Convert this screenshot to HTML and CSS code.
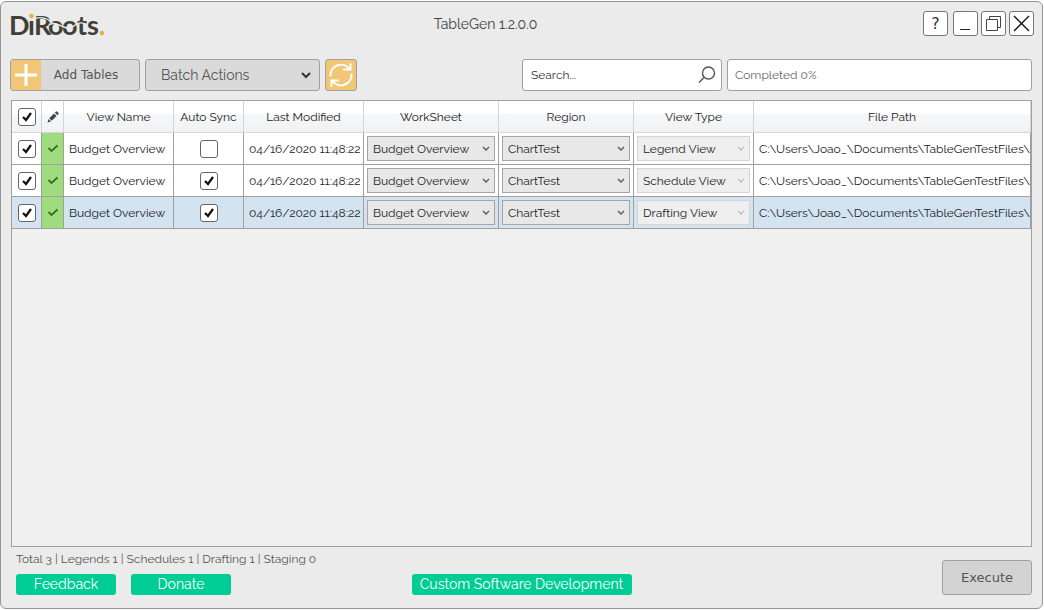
FILE: index.html
```html
<!DOCTYPE html>
<html lang="en">
<head>
    <meta charset="UTF-8">
    <meta name="viewport" content="width=device-width, initial-scale=1.0">
    <title>TableGen 1.2.0.0</title>
    <link rel="stylesheet" href="styles.css">
</head>
<body>
    <div class="window">
        <header class="titlebar">
            <svg class="logo" width="96" height="36" viewBox="0 0 96 36" role="img" aria-label="DiRoots">
                <text class="logo-text" x="-1 18 24 38 52 67 77" y="24">DıRoots</text>
                <path d="M24 8C32 5 38 7 43 13" fill="none" stroke="#ebebeb" stroke-width="1.300"/>
                <path d="M39 14C48 8 54 21 62 16S70 11 76 13" fill="none" stroke="#ebebeb" stroke-width="1.300"/>
                <circle cx="21.500" cy="5" r="2.200" fill="#efa83a"/>
                <circle cx="92" cy="22" r="2.200" fill="#efa83a"/>
            </svg>
            <h1 class="title">TableGen 1.2.0.0</h1>
            <div class="window-buttons">
                <button class="win-btn help" aria-label="Help">?</button>
                <button class="win-btn" aria-label="Minimize">
                    <svg width="23" height="23"><path d="M6 17.500H16" stroke="#222"/></svg>
                </button>
                <button class="win-btn" aria-label="Restore">
                    <svg width="23" height="23" fill="none" stroke="#444"><path d="M4.500 7.500H15.500V18.500H4.500ZM7.500 7.500V4.500H18.500V15.500H15.500"/></svg>
                </button>
                <button class="win-btn" aria-label="Close">
                    <svg width="23" height="23"><path d="M4 4L19 19M19 4L4 19" stroke="#111" stroke-width="1.300"/></svg>
                </button>
            </div>
        </header>

        <div class="toolbar">
            <button class="add-btn">
                <span class="add-icon">
                    <svg width="30" height="30"><path d="M15 4V26M4 15H26" stroke="#fff" stroke-width="3"/></svg>
                </span>
                <span class="add-label">Add Tables</span>
            </button>
            <select class="batch" aria-label="Batch Actions">
                <option>Batch Actions</option>
            </select>
            <button class="refresh" aria-label="Refresh">
                <svg width="30" height="30" fill="none" stroke="#fff" stroke-width="2" stroke-linecap="round">
                    <path d="M4.500 15.500A10.500 10.500 0 0 1 23.500 9M24.500 4V9.500L18 9.500"/>
                    <path d="M25.500 14.500A10.500 10.500 0 0 1 6.500 21M5.500 26V20.500L12 20.500"/>
                </svg>
            </button>
            <span></span>
            <div class="search">
                <input type="text" placeholder="Search..." aria-label="Search">
                <svg width="18" height="18" fill="none" stroke="#555" stroke-width="1.400"><circle cx="10.500" cy="7" r="6"/><path d="M6 11.500L1 16.500"/></svg>
            </div>
            <div class="completed" role="progressbar" aria-valuenow="0" aria-label="Progress">Completed 0%</div>
        </div>

        <main class="grid">
            <table>
                <colgroup>
                    <col class="c-check"><col class="c-state"><col class="c-name"><col class="c-sync"><col class="c-date"><col class="c-sheet"><col class="c-region"><col class="c-type"><col>
                </colgroup>
                <thead>
                    <tr>
                        <th class="center"><input type="checkbox" aria-label="Select all" checked></th>
                        <th class="center">
                            <svg width="12" height="12" viewBox="0 0 12 12" fill="#444"><path d="M0.500 11.500L1.500 8L4 10.500ZM2.200 7.200L7 2.400L9.600 5L4.800 9.800ZM7.800 1.600L9 .500Q9.500 0 10.200.700L11.300 1.800Q12 2.500 11.500 3L10.400 4.200Z"/></svg>
                        </th>
                        <th>View Name</th>
                        <th>Auto Sync</th>
                        <th>Last Modified</th>
                        <th>WorkSheet</th>
                        <th>Region</th>
                        <th>View Type</th>
                        <th>File Path</th>
                    </tr>
                </thead>
                <tbody>
                    <tr>
                        <td class="center"><input type="checkbox" aria-label="Select row 1" checked></td>
                        <td class="center state"><svg width="12" height="9"><path d="M1.500 4L4.500 7L10.500 1.500" fill="none" stroke="#3c6e2e" stroke-width="1.800"/></svg></td>
                        <td>Budget Overview</td>
                        <td class="center"><input type="checkbox" aria-label="Auto sync row 1"></td>
                        <td>04/16/2020 11:48:22</td>
                        <td class="pick"><select aria-label="Worksheet row 1"><option>Budget Overview</option></select></td>
                        <td class="pick"><select aria-label="Region row 1"><option>ChartTest</option></select></td>
                        <td class="pick"><select aria-label="View type row 1" disabled><option>Legend View</option></select></td>
                        <td>C:\Users\Joao_\Documents\TableGenTestFiles\</td>
                    </tr>
                    <tr>
                        <td class="center"><input type="checkbox" aria-label="Select row 2" checked></td>
                        <td class="center state"><svg width="12" height="9"><path d="M1.500 4L4.500 7L10.500 1.500" fill="none" stroke="#3c6e2e" stroke-width="1.800"/></svg></td>
                        <td>Budget Overview</td>
                        <td class="center"><input type="checkbox" aria-label="Auto sync row 2" checked></td>
                        <td>04/16/2020 11:48:22</td>
                        <td class="pick"><select aria-label="Worksheet row 2"><option>Budget Overview</option></select></td>
                        <td class="pick"><select aria-label="Region row 2"><option>ChartTest</option></select></td>
                        <td class="pick"><select aria-label="View type row 2" disabled><option>Schedule View</option></select></td>
                        <td>C:\Users\Joao_\Documents\TableGenTestFiles\</td>
                    </tr>
                    <tr class="selected">
                        <td class="center"><input type="checkbox" aria-label="Select row 3" checked></td>
                        <td class="center state"><svg width="12" height="9"><path d="M1.500 4L4.500 7L10.500 1.500" fill="none" stroke="#3c6e2e" stroke-width="1.800"/></svg></td>
                        <td>Budget Overview</td>
                        <td class="center"><input type="checkbox" aria-label="Auto sync row 3" checked></td>
                        <td>04/16/2020 11:48:22</td>
                        <td class="pick"><select aria-label="Worksheet row 3"><option>Budget Overview</option></select></td>
                        <td class="pick"><select aria-label="Region row 3"><option>ChartTest</option></select></td>
                        <td class="pick"><select aria-label="View type row 3" disabled><option>Drafting View</option></select></td>
                        <td>C:\Users\Joao_\Documents\TableGenTestFiles\</td>
                    </tr>
                </tbody>
            </table>
        </main>

        <footer class="footer">
            <div class="footer-left">
                <p class="totals">Total 3 | Legends 1 | Schedules 1 | Drafting 1 | Staging 0</p>
                <div class="links">
                    <button class="green-btn">Feedback</button>
                    <button class="green-btn">Donate</button>
                </div>
            </div>
            <button class="green-btn custom">Custom Software Development</button>
            <button class="execute">Execute</button>
        </footer>
    </div>
</body>
</html>
```
FILE: styles.css
```css
:root {
    --bg: #ebebeb;
    --line: #a0a0a0;
    --orange: #f1c777;
    --green: #00cc96;
    --text: #222;
}

* {
    box-sizing: border-box;
}

body {
    margin: 0;
    padding: 1px 1px 1px 0;
    height: 100vh;
    background: #fff;
    color: var(--text);
    font-family: Raleway, Lato, sans-serif;
    font-size: 12px;
}

button, input, select {
    font: inherit;
    color: inherit;
    margin: 0;
}

button {
    padding: 0;
}

svg {
    display: block;
}

.window {
    display: flex;
    flex-direction: column;
    height: 100%;
    background: var(--bg);
    border: 1px solid #949494;
    border-radius: 6px;
}

/* Title bar */
.titlebar {
    display: flex;
    align-items: flex-start;
    padding: 9px 8px 0 9px;
    height: 57px;
}

.logo {
    flex: none;
    overflow: visible;
}

.logo-text {
    font-family: Lato, sans-serif;
    font-weight: 700;
    font-size: 27px;
    fill: #3f4036;
}

.title {
    flex: 1;
    margin: 3px 0 0;
    padding-right: 58px;
    text-align: center;
    font-size: 14px;
    line-height: 20px;
    font-weight: 400;
    color: #444;
}

.window-buttons {
    display: flex;
    gap: 3px;
}

.win-btn {
    width: 25px;
    height: 25px;
    background: #fff;
    border: 1px solid #777;
    border-radius: 3px;
}

.help {
    margin-right: 2px;
    font: 16px/23px "DejaVu Sans", sans-serif;
    color: #333;
}

/* Toolbar */
.toolbar {
    display: grid;
    grid-template-columns: 130px 175px 32px 1fr 200px 305px;
    gap: 5px;
    height: 32px;
    padding: 0 10px 0 9px;
}

.add-btn, .batch, .refresh, .search, .completed {
    height: 32px;
    border: 1px solid var(--line);
    border-radius: 3px;
}

.add-btn {
    display: flex;
    align-items: center;
    background: #dadada;
    overflow: hidden;
}

.add-icon {
    background: var(--orange);
}

.add-label {
    flex: 1;
    padding-right: 8px;
    font-family: "DejaVu Sans", sans-serif;
    color: #555;
}

.refresh {
    background: var(--orange);
}

select {
    appearance: none;
    border-radius: 0;
    background-repeat: no-repeat;
}

.batch {
    padding: 0 15px;
    font-size: 14px;
    color: #555;
    background-color: #dadada;
    background-image: url("data:image/svg+xml,%3Csvg xmlns='http://www.w3.org/2000/svg' width='10' height='7'%3E%3Cpath d='M1 1L5 5L9 1' fill='none' stroke='%23333' stroke-width='2'/%3E%3C/svg%3E");
    background-position: right 8px center;
}

.search, .completed {
    display: flex;
    align-items: center;
    padding: 0 5px 0 8px;
    background: #fff;
}

.search input {
    flex: 1;
    min-width: 0;
    padding: 0;
    border: 0;
    outline: 0;
    background: none;
}

.search input::placeholder {
    color: #333;
}

.completed {
    padding-left: 7px;
    color: #666;
}

/* Table */
.grid {
    flex: 1;
    margin: 9px 10px 0 10px;
    border: 1px solid var(--line);
    background: #f0f0f0;
}

table {
    width: 100%;
    table-layout: fixed;
    border-spacing: 0;
}

.c-check { width: 30px; }
.c-state { width: 22px; }
.c-name { width: 110px; }
.c-sync { width: 70px; }
.c-date { width: 120px; }
.c-sheet, .c-region { width: 135px; }
.c-type { width: 120px; }

th, td {
    height: 32px;
    padding: 0 5px;
    border-right: 1px solid var(--line);
    border-bottom: 1px solid var(--line);
    text-align: left;
    white-space: nowrap;
    overflow: hidden;
    background: #fff;
}

th {
    padding: 0 2px;
    text-align: center;
    font-weight: 400;
    border-color: #d5d5d5;
    background: linear-gradient(#fff 40%, #f7f8f9 42%, #eff1f3);
}

.selected td {
    background: #d3e3f0;
}

td.state, .selected td.state {
    background: #9fdc7d;
}

.center {
    padding: 0;
}

.center > * {
    display: block;
    margin: 0 auto;
}

.pick {
    padding: 0 3px;
}

.pick select {
    display: block;
    width: 100%;
    height: 25px;
    padding: 0 5px;
    border: 1px solid #a5a5a5;
    background-color: #e8e8e8;
    background-image: url("data:image/svg+xml,%3Csvg xmlns='http://www.w3.org/2000/svg' width='8' height='6'%3E%3Cpath d='M1 1L4 4L7 1' fill='none' stroke='%23555' stroke-width='1.300'/%3E%3C/svg%3E");
    background-position: right 4px top 9px;
}

.pick select:disabled {
    opacity: 1;
    color: var(--text);
    border-color: #d5d5d5;
    background-color: #efefef;
    background-image: url("data:image/svg+xml,%3Csvg xmlns='http://www.w3.org/2000/svg' width='8' height='6'%3E%3Cpath d='M1 1L4 4L7 1' fill='none' stroke='%23bbb' stroke-width='1.300'/%3E%3C/svg%3E");
}

input[type="checkbox"] {
    appearance: none;
    width: 18px;
    height: 18px;
    border: 1px solid #666;
    border-radius: 3px;
    background: #fff no-repeat center;
}

input[type="checkbox"]:checked {
    background-image: url("data:image/svg+xml,%3Csvg xmlns='http://www.w3.org/2000/svg' width='12' height='12'%3E%3Cpath d='M2 6L5 9L10 2' fill='none' stroke='%23111' stroke-width='2.200'/%3E%3C/svg%3E");
}

/* Footer */
.footer {
    display: grid;
    grid-template-columns: 1fr auto 1fr;
    align-items: end;
    padding: 4px 10px 13px;
}

.footer-left {
    padding-left: 5px;
}

.totals {
    margin: 0 0 7px;
    line-height: 16px;
    color: #555;
}

.links {
    display: flex;
    gap: 15px;
}

.green-btn {
    width: 100px;
    height: 21px;
    border: 0;
    border-radius: 3px;
    background: var(--green);
    color: #fff;
    font-size: 14px;
    line-height: 21px;
}

.custom {
    width: 220px;
}

.execute {
    justify-self: end;
    width: 90px;
    height: 35px;
    border: 1px solid var(--line);
    border-radius: 3px;
    background: #d3d3d3;
    color: #555;
    font-family: "DejaVu Sans", sans-serif;
    font-size: 13px;
}
```
